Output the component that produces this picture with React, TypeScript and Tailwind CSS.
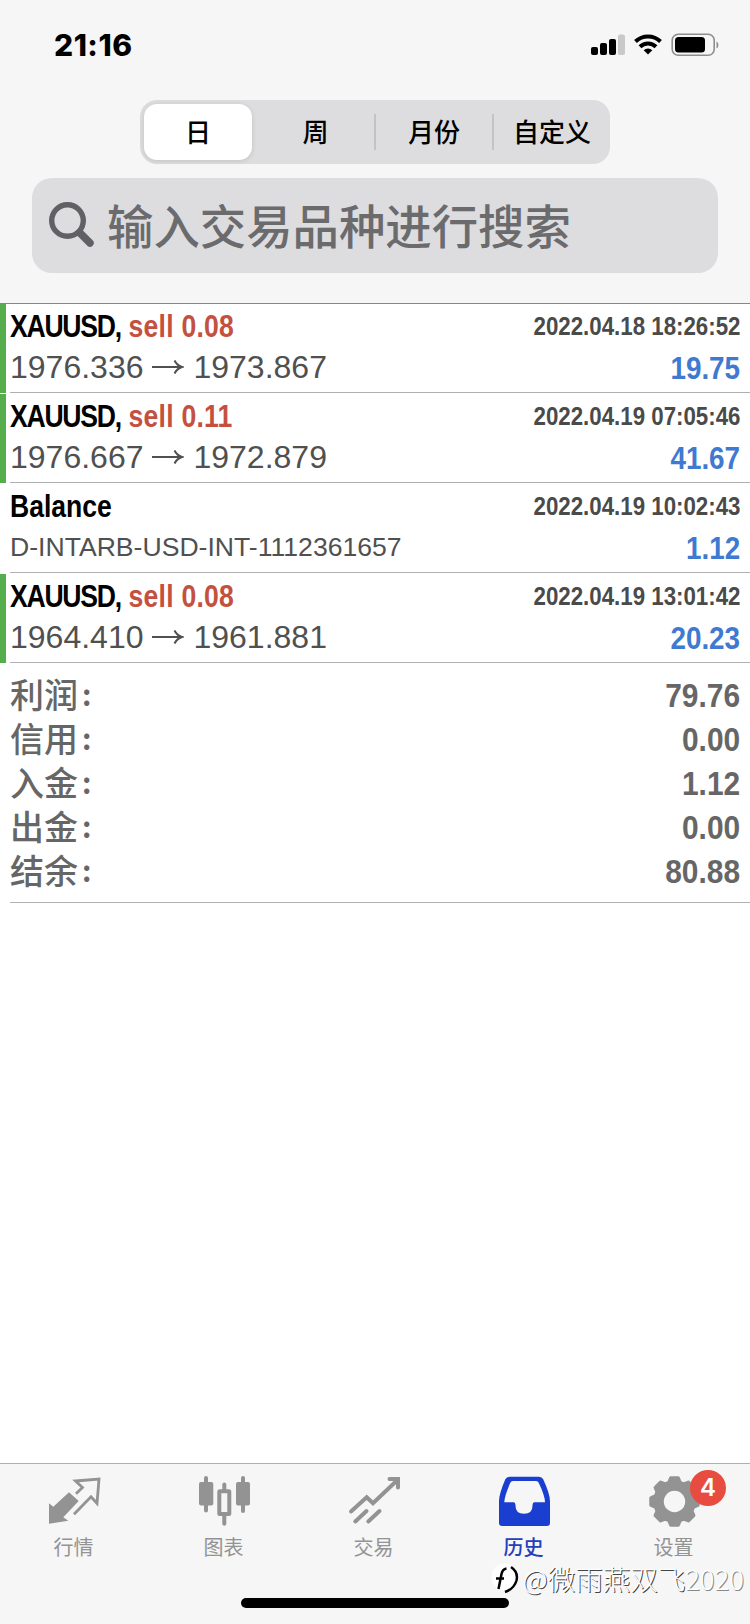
import React from 'react';

type Row = { title: string; side?: string; detail: string[]; time: string; profit: string };

const rows: Row[] = [
  { title: 'XAUUSD,', side: 'sell 0.08', detail: ['1976.336', '1973.867'], time: '2022.04.18 18:26:52', profit: '19.75' },
  { title: 'XAUUSD,', side: 'sell 0.11', detail: ['1976.667', '1972.879'], time: '2022.04.19 07:05:46', profit: '41.67' },
  { title: 'Balance', detail: ['D-INTARB-USD-INT-1112361657'], time: '2022.04.19 10:02:43', profit: '1.12' },
  { title: 'XAUUSD,', side: 'sell 0.08', detail: ['1964.410', '1961.881'], time: '2022.04.19 13:01:42', profit: '20.23' },
];

const totals = [
  ['利润', '79.76'],
  ['信用', '0.00'],
  ['入金', '1.12'],
  ['出金', '0.00'],
  ['结余', '80.88'],
];

function StatusBar() {
  return (
    <div className="flex h-[100px] shrink-0 items-start justify-between pl-[54px] pr-[30px]">
      <span className="mt-[29px] font-['Inter'] text-[30px] leading-[32px] font-extrabold tracking-[0.5px] text-black">21:16</span>
      <svg className="mt-[32px]" width="130" height="26" viewBox="0 0 130 26">
        <g>
          <rect x="1" y="15" width="7" height="8" rx="2" />
          <rect x="10" y="11" width="7" height="12" rx="2" />
          <rect x="19" y="7" width="7" height="16" rx="2" />
          <rect x="28" y="2.500" width="7" height="20.500" rx="2" fill="#c9c9c9" />
        </g>
        <g fill="none" stroke="#000" strokeWidth="4">
          <path d="M45.500 9.500a18 18 0 0 1 25 0" />
          <path d="M50 14.800a11.500 11.500 0 0 1 16 0" />
        </g>
        <path d="M58 22.500l-4.300-4.300a6.200 6.200 0 0 1 8.600 0z" />
        <rect x="82.200" y="2.200" width="42" height="21" rx="6" fill="none" stroke="#8e8e8e" strokeWidth="1.600" />
        <rect x="85" y="5" width="30" height="15.500" rx="3.500" />
        <path d="M126.500 9.500c2.500 1 2.500 6 0 7z" fill="#8e8e8e" />
      </svg>
    </div>
  );
}

function Segments() {
  return (
    <div className="ml-[140px] flex h-16 w-[470px] shrink-0 items-center rounded-[17px] bg-[#dddddf] text-[26px] font-medium text-black">
      <div className="ml-[4px] flex h-14 w-[108px] items-center justify-center rounded-[13px] bg-white pt-[2px] shadow-[0_1px_5px_rgba(0,0,0,0.12)]">日</div>
      <div className="flex w-[127px] items-center justify-center pt-[2px]">周</div>
      <div className="ml-[-5px] h-9 w-[2px] bg-[#c3c3c6]" />
      <div className="flex w-[116px] items-center justify-center pt-[2px]">月份</div>
      <div className="h-9 w-[2px] bg-[#c3c3c6]" />
      <div className="flex flex-1 items-center justify-center pt-[2px]">自定义</div>
    </div>
  );
}

function Arrow() {
  return (
    <svg className="mr-[9px] ml-[9px]" width="32" height="22" viewBox="0 0 32 22" fill="none" stroke="#505050" strokeWidth="2">
      <path d="M0 11h29M22.500 4.500q2.500 5 7.500 6.500q-5 1.500-7.500 6.500" />
    </svg>
  );
}

function HistoryRow({ row }: { row: Row }) {
  return (
    <div className="relative h-[90px] shrink-0">
      {row.side && <div className="absolute left-0 top-[1px] h-[89px] w-[6px] bg-[#56ad4c]" />}
      <div className="ml-[10px] flex h-[90px] flex-col border-b border-[#b0b0b2]">
        <div className="flex h-[46px] items-center justify-between pr-[10px]">
          <div className="origin-left scale-x-[0.83] whitespace-pre text-[32px] font-bold text-black">
            <span className={row.side ? 'tracking-[-1.5px]' : ''}>{row.title}</span>
            {row.side && <span className="tracking-[0.3px] text-[#c4513f]"> {row.side}</span>}
          </div>
          <div className="origin-right scale-x-[0.857] whitespace-nowrap text-[26px] font-bold text-[#4a4a4a]">{row.time}</div>
        </div>
        <div className="flex h-[37px] items-center justify-between pr-[10px]">
          {row.side ? (
            <div className="mb-[2px] flex items-center text-[32px] text-[#505050]">
              <span>{row.detail[0]}</span>
              <Arrow />
              <span>{row.detail[1]}</span>
            </div>
          ) : (
            <div className="pt-[1px] text-[26.600px] text-[#505050]">{row.detail[0]}</div>
          )}
          <div className="origin-right scale-x-[0.87] text-[32px] font-bold text-[#4079d0]">{row.profit}</div>
        </div>
      </div>
    </div>
  );
}

function Tab({ label, active, children }: { label: string; active?: boolean; children: React.ReactNode }) {
  return (
    <div className={active ? 'flex w-[150px] flex-col items-center text-[#2340bb]' : 'flex w-[150px] flex-col items-center text-[#939393]'}>
      <svg className="mt-[10px]" width="60" height="56" viewBox="0 0 60 56">{children}</svg>
      <span className={active ? 'mt-[4px] pr-[3px] text-[20px] leading-[28px] font-medium' : 'mt-[4px] pr-[3px] text-[20px] leading-[28px]'}>{label}</span>
    </div>
  );
}

function gearPath() {
  const teeth = 8;
  const points: string[] = [];
  for (let i = 0; i < teeth; i++) {
    const center = (i * 2 * Math.PI) / teeth - Math.PI / 2;
    for (const [offset, radius] of [[-0.28, 19.5], [-0.15, 23.5], [0.15, 23.5], [0.28, 19.5]]) {
      const a = center + offset;
      points.push(`${(29.5 + radius * Math.cos(a)).toFixed(2)} ${(27.5 + radius * Math.sin(a)).toFixed(2)}`);
    }
  }
  return `M${points.join('L')}Z`;
}

function TabBar() {
  return (
    <nav className="relative flex h-[161px] shrink-0 border-t border-[#b0b0b2] bg-[#f6f6f6]">
      <Tab label="行情">
        <path d="M4 29.300L8.300 32.700L24 18.300L33.700 27L18.300 43.200L23.300 46.700L4 49.700Z" fill="currentColor" />
        <path d="M31 19.700L37.500 13.500L30.500 7L54 5L52 29.300L46 22.700L29 40.300" fill="none" stroke="currentColor" strokeWidth="2.800" />
      </Tab>
      <Tab label="图表">
        <g stroke="currentColor" strokeWidth="4" strokeLinecap="round">
          <path d="M11 4v32.500M48 4v33M29.300 10.500v6M29.300 41v8.700" />
        </g>
        <rect x="4" y="8" width="14.300" height="23.500" rx="2" fill="currentColor" />
        <rect x="41" y="8" width="14" height="23.500" rx="2" fill="currentColor" />
        <rect x="24.300" y="17.300" width="10" height="22.700" rx="0.500" fill="none" stroke="currentColor" strokeWidth="4" />
      </Tab>
      <Tab label="交易">
        <g fill="none" stroke="currentColor" strokeWidth="4" strokeLinecap="round">
          <path d="M6 37.500L21.700 23.300L28 29.300L53 5.500M44.500 5h8.500v8.500M10.300 47.500L21.500 37M23.300 47.500L34.500 37" />
        </g>
      </Tab>
      <Tab label="历史" active>
        <path fill="#1a3fd0" fillRule="evenodd" d="M14.500 2.700h29.500q3 0 4.200 2.500Q55 20 55 27v22q0 3-3 3H7q-3 0-3-3V27Q4 20 10.300 5.200q1.200-2.500 4.200-2.500zM18 7q-2 0-2.700 1.800Q9.500 22 9.300 28.300H18.500q2 0 2 3.500 0 8 8.500 8t8.500-8q0-3.500 2-3.500H50Q50 22 43.700 8.800Q43 7 41 7z" />
      </Tab>
      <Tab label="设置">
        <path d={gearPath()} fill="currentColor" stroke="currentColor" strokeWidth="4" strokeLinejoin="round" />
        <circle cx="29.500" cy="27.500" r="10.700" fill="#f6f6f6" />
      </Tab>
      <div className="absolute left-[690px] top-[6px] flex h-9 w-9 items-center justify-center rounded-full bg-[#e84c40] font-['Inter'] text-[24px] font-semibold text-white">4</div>
      <div className="absolute right-[6px] top-[97px] flex items-center font-['Noto_Sans_CJK_SC'] text-[27.500px] leading-[32px] font-light whitespace-nowrap text-white [text-shadow:1px_1px_0_#444]">
        <svg className="mr-[1px]" width="32" height="34" viewBox="0 0 32 34">
          <circle cx="15" cy="16" r="13.500" fill="#fff" />
          <path d="M16.500 7.500Q12.500 8 11.500 13L8.500 28M6 17.500h8M21 6q7.500 5 5.500 13.500Q24 28 15 31" fill="none" stroke="#000" strokeWidth="2.500" />
        </svg>
        <span>@微雨燕双飞</span>
        <span className="[text-shadow:1px_1px_0_#888]">2020</span>
      </div>
      <div className="absolute left-[241px] top-[134px] h-[10px] w-[268px] rounded-full bg-black" />
    </nav>
  );
}

export default function App() {
  return (
    <div className="flex h-[1624px] w-[750px] flex-col overflow-hidden bg-white font-['Liberation_Sans','Noto_Sans_CJK_SC',sans-serif]">
      <header className="flex h-[304px] shrink-0 flex-col border-b border-[#858785] bg-[#f6f6f6]">
        <StatusBar />
        <Segments />
        <div className="ml-[32px] mt-[14px] flex h-[95px] w-[686px] shrink-0 items-center rounded-[20px] bg-[#dddddf]">
          <svg className="mb-[3px] ml-[15px]" width="48" height="48" viewBox="0 0 48 48" fill="none" stroke="#616165" strokeLinecap="round">
            <circle cx="20.500" cy="20.500" r="15.800" strokeWidth="5.400" />
            <path d="M33 33l10 10" strokeWidth="7.500" />
          </svg>
          <span className="ml-[12px] pt-[5px] text-[46.400px] leading-[60px] font-medium text-[#6b6b6e]">输入交易品种进行搜索</span>
        </div>
      </header>
      <main className="-mt-px flex flex-1 flex-col">
        {rows.map((row) => (
          <HistoryRow key={row.time} row={row} />
        ))}
        <div className="ml-[10px] flex h-[240px] flex-col border-b border-[#b0b0b2] pt-[10px]">
          {totals.map(([label, value]) => (
            <div key={label} className="flex h-[44px] items-center justify-between pr-[10px] text-[#666666]">
              <span className="flex pt-[1px] text-[34px] leading-[44px] font-medium">
                {label}
                <span className="-mt-[3px] ml-[4px] font-['Noto_Sans_CJK_SC'] text-[29px] font-bold">:</span>
              </span>
              <span className="origin-right scale-x-[0.88] text-[34px] font-bold">{value}</span>
            </div>
          ))}
        </div>
      </main>
      <TabBar />
    </div>
  );
}
